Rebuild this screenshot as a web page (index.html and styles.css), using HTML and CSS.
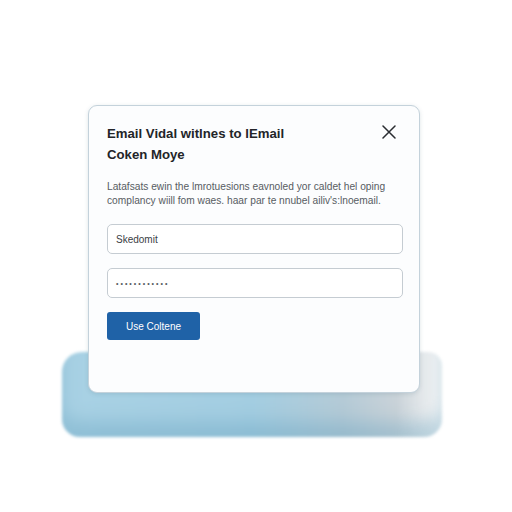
FILE: index.html
```html
<!DOCTYPE html>
<html lang="en">
<head>
<meta charset="utf-8">
<title>Email dialog</title>
<link rel="stylesheet" href="styles.css">
</head>
<body>
  <main class="stage">
    <div class="dialog-wrap">
      <div class="backdrop"></div>
      <section class="dialog">
        <header class="dialog-head">
          <h1 class="dialog-title">Email Vidal witlnes to lEmail<br>Coken Moye</h1>
          <button class="close" aria-label="Close">
            <svg width="14" height="14" viewBox="0 0 14 14"><path d="M1 1L13 13M13 1L1 13" stroke="#2a2d31" stroke-width="1.5" stroke-linecap="round"/></svg>
          </button>
        </header>
        <p class="dialog-text">Latafsats ewin the lmrotuesions eavnoled yor caldet hel oping<br>complancy wiill fom waes. haar par te nnubel ailiv's:lnoemail.</p>
        <div class="field">Skedomit</div>
        <div class="field field-pass">••••••••••••</div>
        <button class="primary">Use Coltene</button>
      </section>
    </div>
  </main>
</body>
</html>
```
FILE: styles.css
```css
html, body {
  margin: 0;
  background: #ffffff;
}

.stage {
  box-sizing: border-box;
  min-height: 512px;
  padding: 105px 0 0 88px;
  font-family: "Liberation Sans", Arial, sans-serif;
}

.dialog-wrap {
  position: relative;
  width: 332px;
}

/* soft blue slab peeking out under the dialog */
.backdrop {
  position: absolute;
  left: -26px;
  top: 247px;
  width: 380px;
  height: 85px;
  border-radius: 20px 14px 18px 18px;
  background: linear-gradient(90deg, #a8d1e4 0%, #a3cde1 50%, #b4cad6 74%, #c9d2d8 88%, rgba(225,228,230,0.3) 100%);
  filter: blur(1.5px);
  box-shadow: inset 0 -16px 16px rgba(100,160,190,0.35);
}

.dialog {
  position: relative;
  box-sizing: border-box;
  height: 288px;
  padding: 17px 18px 0 18px;
  background: #fcfdfe;
  border: 1.5px solid #c4d2db;
  border-radius: 9px;
  box-shadow: 0 1px 4px rgba(80,110,130,0.18);
}

.dialog-head {
  display: flex;
  justify-content: space-between;
  align-items: flex-start;
}

.dialog-title {
  margin: 0;
  font-size: 13.2px;
  font-weight: 700;
  line-height: 21px;
  color: #232529;
}

.close {
  margin: 2px 5px 0 0;
  padding: 0;
  border: 0;
  background: none;
  display: flex;
}

.dialog-text {
  margin: 15px 0 16px;
  font-size: 10.2px;
  line-height: 14px;
  color: #575c62;
}

.field {
  box-sizing: border-box;
  width: 296px;
  height: 30px;
  margin-bottom: 14px;
  padding: 0 8px;
  display: flex;
  align-items: center;
  border: 1px solid #c5ccd2;
  border-radius: 5px;
  background: #ffffff;
  font-size: 10px;
  color: #3a3e44;
}

.field-pass {
  font-size: 7px;
  letter-spacing: 2px;
  color: #555a60;
}

.primary {
  width: 93px;
  height: 28px;
  border: 0;
  border-radius: 3px;
  background: #1f62a7;
  color: #ffffff;
  font-family: "Liberation Sans", Arial, sans-serif;
  font-size: 10px;
}
```
